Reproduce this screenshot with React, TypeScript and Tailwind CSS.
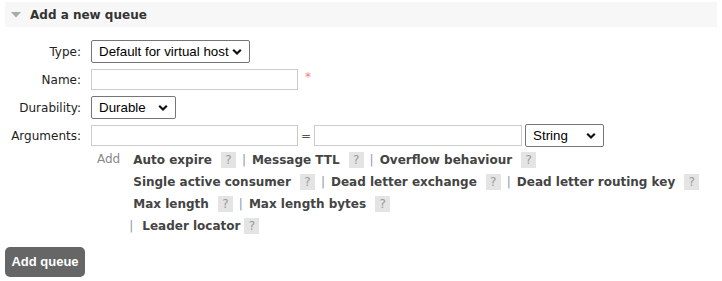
import { type ReactNode } from 'react';

const Chevron = () => (
  <svg className="pointer-events-none absolute right-[7px] top-1/2 -translate-y-1/2" width="10" height="7" viewBox="0 0 10 7">
    <path d="M1.2 1.2 L5 5 L8.8 1.2" fill="none" stroke="#111" strokeWidth="2.2" />
  </svg>
);

interface SelectBoxProps {
  value: string;
  width: string;
}

const SelectBox = ({ value, width }: SelectBoxProps) => (
  <div className={`relative h-[23px] ${width} rounded-[2px] border border-[#767676] bg-white`}>
    <span className="block pl-[7px] pt-[2px] font-['Liberation_Sans',Arial,sans-serif] text-[13.33px] leading-[17px] text-black">
      {value}
    </span>
    <Chevron />
  </div>
);

const TextBox = ({ width }: { width: string }) => (
  <div className={`h-[21px] ${width} border border-[#cccccc] bg-white`} />
);

const Help = ({ tight = false }: { tight?: boolean }) => (
  <span
    className={`inline-flex h-[16px] w-[15px] items-center justify-center bg-[#e4e4e4] text-[12px] font-normal text-[#999] ${tight ? 'ml-[4px]' : 'ml-[9px]'}`}
  >
    ?
  </span>
);

const Sep = () => <span className="mx-[6px] font-normal text-[#8899aa]">|</span>;

const Arg = ({ label, tight }: { label: string; tight?: boolean }) => (
  <span className="inline-flex items-center">
    <span className="font-bold text-[#444]">{label}</span>
    <Help tight={tight} />
  </span>
);

const Row = ({ label, children, className = '' }: { label: string; children: ReactNode; className?: string }) => (
  <div className={`flex items-center ${className}`}>
    <div className="w-[82px] pr-[1px] text-right text-[#222]">{label}</div>
    <div className="ml-[9px] flex items-center">{children}</div>
  </div>
);

export default function App() {
  return (
    <div className="h-[281px] w-[722px] overflow-hidden bg-white font-['DejaVu_Sans',Verdana,sans-serif] text-[12px] text-[#484848]">
      <div className="mx-[5px] mt-[2px] flex h-[25px] items-center bg-[#f7f7f7]">
        <svg className="ml-[6px]" width="10" height="6" viewBox="0 0 10 6">
          <path d="M0 0 H10 L5 5.5 Z" fill="#aaaaaa" />
        </svg>
        <span className="ml-[9px] font-bold text-[#333]">Add a new queue</span>
      </div>

      <div className="mt-[13px] flex flex-col gap-[6px]">
        <Row label="Type:">
          <SelectBox value="Default for virtual host" width="w-[159px]" />
        </Row>
        <Row label="Name:">
          <TextBox width="w-[207px]" />
          <span className="ml-[7px] -mt-[6px] text-[#f08080]">*</span>
        </Row>
        <Row label="Durability:">
          <SelectBox value="Durable" width="w-[85px]" />
        </Row>
        <Row label="Arguments:" className="-mt-[1px]">
          <TextBox width="w-[207px]" />
          <span className="mx-[3px] text-[#555]">=</span>
          <TextBox width="w-[208px]" />
          <div className="ml-[3px]">
            <SelectBox value="String" width="w-[79px]" />
          </div>
        </Row>
      </div>

      <div className="mt-[2px] flex pl-[97px]">
        <span className="mt-[1px] text-[#888]">Add</span>
        <div className="ml-[13px] flex flex-col">
          <div className="flex h-[22px] items-center">
            <Arg label="Auto expire" />
            <Sep />
            <Arg label="Message TTL" />
            <Sep />
            <Arg label="Overflow behaviour" />
          </div>
          <div className="flex h-[22px] items-center">
            <Arg label="Single active consumer" />
            <Sep />
            <Arg label="Dead letter exchange" />
            <Sep />
            <Arg label="Dead letter routing key" />
          </div>
          <div className="flex h-[22px] items-center">
            <Arg label="Max length" />
            <Sep />
            <Arg label="Max length bytes" />
          </div>
          <div className="-ml-[4px] flex h-[22px] items-center">
            <span className="mr-[9px] text-[#8899aa]">|</span>
            <Arg label="Leader locator" tight />
          </div>
        </div>
      </div>

      <button className="ml-[5px] mt-[10px] h-[30px] w-[80px] rounded-[5px] bg-[#666] font-['Liberation_Sans',Arial,sans-serif] text-[13px] font-bold text-white">
        Add queue
      </button>
    </div>
  );
}
